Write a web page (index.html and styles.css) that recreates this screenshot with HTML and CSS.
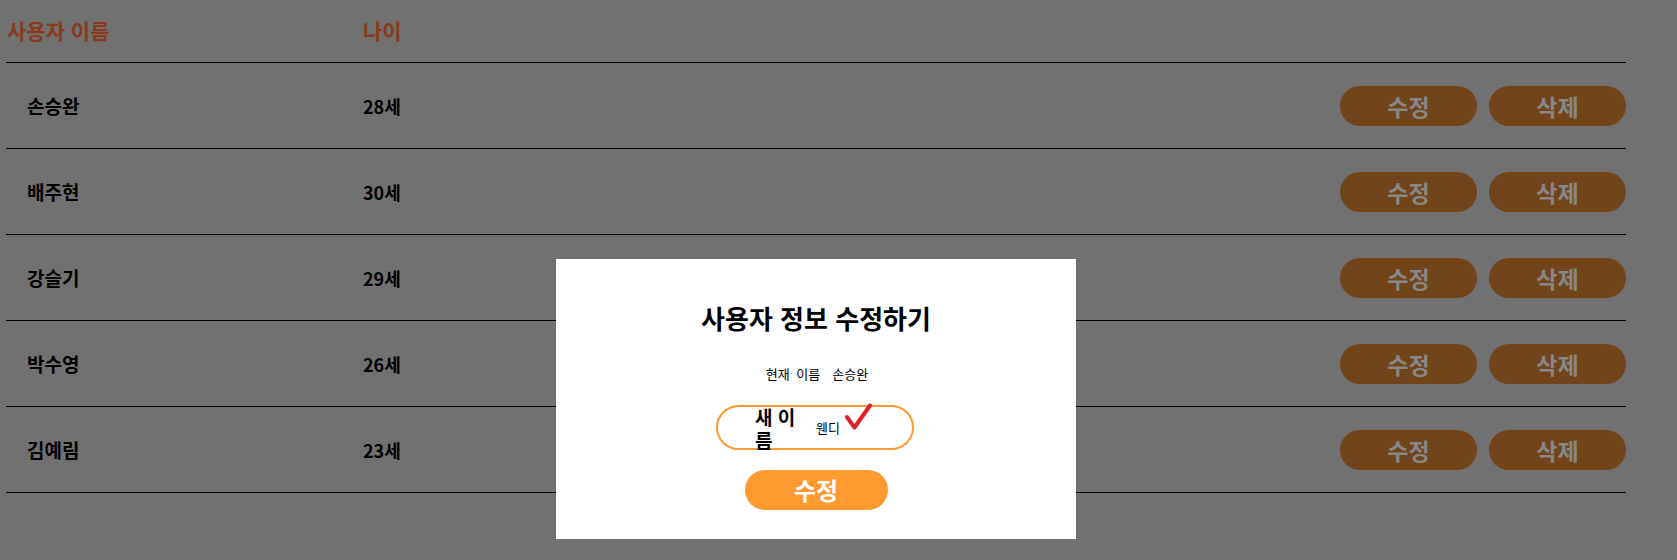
FILE: index.html
```html
<!DOCTYPE html>
<html lang="ko">
<head>
<meta charset="utf-8">
<title>사용자 목록</title>
<link rel="stylesheet" href="styles.css">
</head>
<body>
<div class="table">
  <div class="thead">
    <div class="th th-name">사용자 이름</div>
    <div class="th">나이</div>
  </div>
  <div class="row">
    <div class="cell-name">손승완</div>
    <div class="cell-age">28세</div>
    <div class="actions"><button class="btn">수정</button><button class="btn">삭제</button></div>
  </div>
  <div class="row">
    <div class="cell-name">배주현</div>
    <div class="cell-age">30세</div>
    <div class="actions"><button class="btn">수정</button><button class="btn">삭제</button></div>
  </div>
  <div class="row">
    <div class="cell-name">강슬기</div>
    <div class="cell-age">29세</div>
    <div class="actions"><button class="btn">수정</button><button class="btn">삭제</button></div>
  </div>
  <div class="row">
    <div class="cell-name">박수영</div>
    <div class="cell-age">26세</div>
    <div class="actions"><button class="btn">수정</button><button class="btn">삭제</button></div>
  </div>
  <div class="row">
    <div class="cell-name">김예림</div>
    <div class="cell-age">23세</div>
    <div class="actions"><button class="btn">수정</button><button class="btn">삭제</button></div>
  </div>
</div>

<div class="modal">
  <h2 class="modal-title">사용자 정보 수정하기</h2>
  <p class="current">현재 이름<span class="current-name">손승완</span></p>
  <div class="field">
    <label class="field-label">새 이름</label>
    <input class="field-input" type="text" value="웬디">
    <svg class="check" width="28" height="28" viewBox="0 0 28 28" aria-hidden="true">
      <polyline points="2,14 9.5,24.5 25,2.5" fill="none" stroke="#e41e25" stroke-width="4" stroke-linecap="round" stroke-linejoin="round"/>
    </svg>
  </div>
  <button class="submit">수정</button>
</div>
</body>
</html>
```

FILE: styles.css
```css
* { box-sizing: border-box; }

html, body {
  margin: 0;
  padding: 0;
}

body {
  background: #717171;
  font-family: "Noto Sans CJK KR", "Noto Sans", sans-serif;
  width: 1677px;
  height: 560px;
  overflow: hidden;
  position: relative;
}

.table {
  margin-left: 6px;
  width: 1620px;
}

.thead {
  display: grid;
  grid-template-columns: 357px 1fr;
  align-items: center;
  height: 63px;
  border-bottom: 1px solid #000;
}

.th {
  font-size: 21px;
  font-weight: 700;
  color: #893a1c;
  line-height: 28px;
  padding-bottom: 2px;
}

.th-name { padding-left: 1px; }

.row {
  display: grid;
  grid-template-columns: 357px 1fr auto;
  align-items: center;
  height: 86px;
  border-bottom: 1px solid #000;
}

.cell-name {
  padding-left: 21px;
  font-size: 19px;
  font-weight: 700;
  color: #000;
}

.cell-age {
  font-size: 18px;
  font-weight: 700;
  color: #000;
}

.actions {
  display: flex;
  gap: 12px;
}

.btn {
  width: 137px;
  height: 40px;
  border: none;
  border-radius: 20px;
  background: #71441a;
  color: #878787;
  font-family: inherit;
  font-size: 23px;
  font-weight: 700;
  line-height: 40px;
  padding: 0;
}

.modal {
  position: absolute;
  left: 556px;
  top: 259px;
  width: 520px;
  height: 280px;
  background: #fff;
  display: flex;
  flex-direction: column;
  align-items: center;
  padding-top: 42px;
}

.modal-title {
  margin: 0;
  font-size: 26px;
  font-weight: 700;
  line-height: 34px;
  color: #000;
}

.current {
  margin: 30px 0 0 0;
  font-size: 13px;
  line-height: 18px;
  color: #000;
  padding-left: 2px;
  word-spacing: 3px;
}

.current-name { margin-left: 12px; }

.field {
  position: relative;
  margin-top: 22px;
  width: 198px;
  height: 45px;
  border: 2px solid #ff9a30;
  border-radius: 23px;
  display: flex;
  align-items: center;
  padding-left: 37px;
  margin-left: -2px;
}

.field-label {
  width: 48px;
  font-size: 19px;
  font-weight: 700;
  line-height: 23px;
  color: #000;
  flex-shrink: 0;
  margin-top: 1px;
}

.field-input {
  margin-left: 13px;
  width: 80px;
  border: none;
  outline: none;
  padding: 0;
  font-family: inherit;
  font-size: 13px;
  color: #000;
  background: transparent;
}

.check {
  position: absolute;
  left: 127px;
  top: -4px;
}

.submit {
  margin-top: 20px;
  width: 143px;
  height: 40px;
  border: none;
  border-radius: 20px;
  background: #ff9a30;
  color: #fff;
  font-family: inherit;
  font-size: 24px;
  font-weight: 700;
  line-height: 40px;
  padding: 0;
}
```
